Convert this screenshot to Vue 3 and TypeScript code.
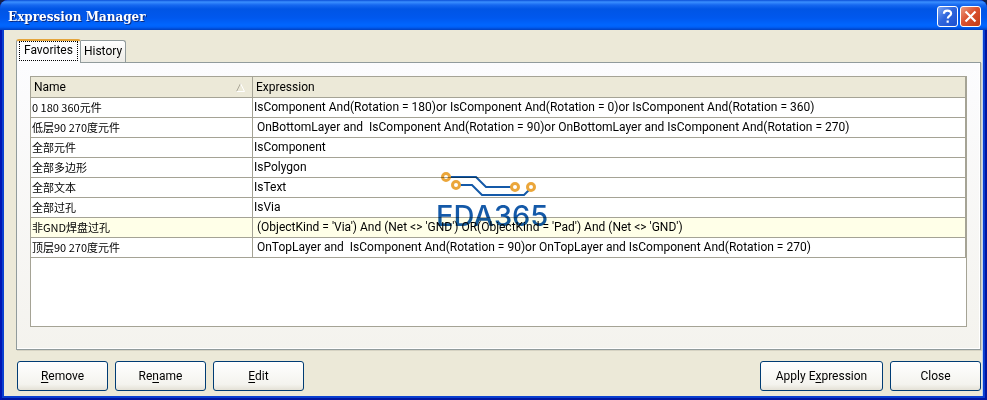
<script setup lang="ts">
import { ref } from 'vue'

interface Favorite {
  name: string
  expression: string
}

const tabs: string[] = ['Favorites', 'History']
const activeTab = ref<string>('Favorites')
const selected = ref<number>(6)

const favorites: Favorite[] = [
  { name: '0 180 360元件', expression: 'IsComponent And(Rotation = 180)or IsComponent And(Rotation = 0)or IsComponent And(Rotation = 360)' },
  { name: '低层90 270度元件', expression: ' OnBottomLayer and  IsComponent And(Rotation = 90)or OnBottomLayer and IsComponent And(Rotation = 270)' },
  { name: '全部元件', expression: 'IsComponent' },
  { name: '全部多边形', expression: 'IsPolygon' },
  { name: '全部文本', expression: 'IsText' },
  { name: '全部过孔', expression: 'IsVia' },
  { name: '非GND焊盘过孔', expression: " (ObjectKind = 'Via') And (Net <> 'GND') OR(ObjectKind = 'Pad') And (Net <> 'GND')" },
  { name: '顶层90 270度元件', expression: ' OnTopLayer and  IsComponent And(Rotation = 90)or OnTopLayer and IsComponent And(Rotation = 270)' },
]
</script>

<template>
  <div class="window">
    <header class="titlebar">
      <h1 class="title">Expression Manager</h1>
      <button class="caption help" type="button" aria-label="Help">
        <svg viewBox="0 0 21 21" aria-hidden="true">
          <path d="M6.5 7.5C6.5 5 8.200 4 10.500 4s4 1.200 4 3.200c0 2.600-3.700 2.800-3.700 5.600" />
          <path d="M10.700 15v2.500" />
        </svg>
      </button>
      <button class="caption close" type="button" aria-label="Close window">
        <svg viewBox="0 0 21 21" aria-hidden="true">
          <path d="M5 5l11 11M16 5L5 16" />
        </svg>
      </button>
    </header>

    <main class="body">
      <div class="tabs" role="tablist">
        <button
          v-for="tab in tabs"
          :key="tab"
          type="button"
          role="tab"
          class="tab"
          :class="{ active: tab === activeTab }"
          :aria-selected="tab === activeTab"
          @click="activeTab = tab"
        ><span>{{ tab }}</span></button>
      </div>

      <section class="panel">
        <div class="grid">
          <table>
            <thead>
              <tr>
                <th class="name-col">
                  <div class="sortable">
                    Name
                    <svg class="sort" viewBox="0 0 9 9" aria-hidden="true">
                      <path class="dark" d="M0.500 8.500L4.500 0.500" />
                      <path class="light" d="M4.500 0.500L8.500 8.500H0.500" />
                    </svg>
                  </div>
                </th>
                <th>Expression</th>
              </tr>
            </thead>
            <tbody>
              <tr
                v-for="(item, index) in favorites"
                :key="item.name"
                :class="{ selected: index === selected }"
                @click="selected = index"
              >
                <td>{{ item.name }}</td>
                <td>{{ item.expression }}</td>
              </tr>
            </tbody>
          </table>
          <div class="watermark">
            <svg viewBox="0 0 98 24" aria-hidden="true">
              <g class="traces">
                <path d="M10 5h26l10 10h25" />
                <path d="M20 13h12l10 10h42l5-5" />
              </g>
              <g class="pads">
                <circle cx="6" cy="5" r="3.500" />
                <circle cx="16" cy="13" r="3.500" />
                <circle cx="75" cy="15" r="3.500" />
                <circle cx="91" cy="15" r="3.500" />
              </g>
            </svg>
            <span>EDA365</span>
          </div>
        </div>
      </section>

      <footer class="actions">
        <button type="button" class="push"><u>R</u>emove</button>
        <button type="button" class="push">Re<u>n</u>ame</button>
        <button type="button" class="push"><u>E</u>dit</button>
        <span class="spacer"></span>
        <button type="button" class="push wide">Apply E<u>x</u>pression</button>
        <button type="button" class="push">Close</button>
      </footer>
    </main>
  </div>
</template>

<style>
body {
  background: #15204a;
}
</style>

<style scoped>
.window {
  box-sizing: border-box;
  min-height: 100vh;
  display: flex;
  flex-direction: column;
  padding: 0 4px 4px;
  background: #0a3fd0;
  box-shadow: inset 2px 0 #0016b4, inset -2px 0 #0016a0, inset 0 -2px #0016a0;
  border-radius: 8px 8px 0 0;
  overflow: hidden;
  font-family: Roboto, "Noto Sans CJK SC", sans-serif;
  font-size: 12px;
  line-height: 16px;
  color: #000;
}

button {
  font: inherit;
  color: inherit;
  margin: 0;
  padding: 0;
}

.titlebar {
  display: flex;
  align-items: center;
  gap: 2px;
  height: 30px;
  margin: 0 -4px;
  padding: 0 6px 0 8px;
  box-sizing: border-box;
  background: linear-gradient(#0a4fd8 0, #3a8fff 2px, #1668f0 5px, #0055e5 9px, #0058ee 18px, #0066ff 25px, #0060f8 27px, #0040c0 30px);
}

.title {
  flex: 1;
  margin: 0;
  padding-top: 4px;
  font: bold 12px/16px "DejaVu Serif", serif;
  color: #fff;
  text-shadow: 1px 1px #0a2a80;
}

.caption {
  box-sizing: border-box;
  width: 21px;
  height: 21px;
  margin-top: 3px;
  border: 1px solid #fff;
  border-radius: 3px;
  background: linear-gradient(135deg, #7ba4f2, #2f66dd 45%, #1c50d0);
}

.caption.close {
  background: linear-gradient(135deg, #eb9a80, #dc5230 45%, #c23c16);
}

.caption svg {
  display: block;
  width: 19px;
  height: 19px;
  fill: none;
  stroke: #fff;
  stroke-width: 2.4;
}

.body {
  flex: 1;
  display: flex;
  flex-direction: column;
  padding: 9px 1px 6px 12px;
  background: #ece9d8;
  border-right: 1px solid #b9d2f4;
}

.tabs {
  display: flex;
  align-items: flex-end;
  position: relative;
}

.tab {
  box-sizing: border-box;
  height: 22px;
  padding: 0 3px 2px;
  border: 1px solid #919b9c;
  border-left: 0;
  border-bottom: 0;
  border-radius: 0 3px 0 0;
  background: linear-gradient(#fff, #ecebe6);
}

.tab.active {
  height: 24px;
  margin-bottom: -1px;
  padding: 0 2px 2px;
  border-left: 1px solid #919b9c;
  border-top: 2px solid #e5a53c;
  border-radius: 3px 3px 0 0;
  background: #fcfcfe;
}

.tab.active span {
  display: block;
  height: 18px;
  padding: 0 4px;
  border: 1px dotted #000;
}

.panel {
  flex: 1;
  display: flex;
  padding: 13px 13px 22px;
  border: 1px solid #919b9c;
  background: linear-gradient(#fcfcfe, #f4f3ee);
  box-shadow: inset -1px -1px #fff, 1px 1px #d6d3c3;
}

.grid {
  flex: 1;
  position: relative;
  border: 1px solid #a5a395;
  background: #fff;
}

table {
  width: 100%;
  table-layout: fixed;
  border-collapse: separate;
  border-spacing: 0;
}

th,
td {
  box-sizing: border-box;
  height: 20px;
  padding: 0 1px 1px;
  border-right: 1px solid #a5a395;
  border-bottom: 1px solid #a5a395;
  text-align: left;
  font-weight: normal;
  line-height: 16px;
  white-space: pre;
  overflow: hidden;
}

th {
  height: 21px;
  padding: 0 3px;
  background: #ece9d8;
}

.name-col {
  width: 222px;
}

td:first-child {
  padding-bottom: 2px;
  font-family: "Noto Sans CJK SC", sans-serif;
  font-size: 11px;
}

.sortable {
  display: flex;
  align-items: center;
  justify-content: space-between;
  white-space: nowrap;
}

.sort {
  width: 9px;
  height: 9px;
  margin-right: 4px;
  fill: none;
}

.dark {
  stroke: #aca899;
}

.light {
  stroke: #fff;
}

.selected td {
  background: #ffffe8;
}

.watermark {
  position: absolute;
  left: 405px;
  top: 95px;
  display: flex;
  flex-direction: column;
  gap: 4px;
  color: #1459a8;
  font-family: Inter, sans-serif;
  font-size: 29px;
  font-weight: 500;
  line-height: 32px;
  mix-blend-mode: multiply;
  pointer-events: none;
}

.watermark svg {
  width: 98px;
  height: 24px;
  margin-left: 4px;
  fill: none;
}

.traces {
  stroke: #1459a8;
  stroke-width: 2;
}

.pads {
  stroke: #eba63a;
  stroke-width: 3;
}

.actions {
  display: flex;
  gap: 7px;
  padding: 11px 0 0 1px;
  margin-bottom: -1px;
}

.spacer {
  flex: 1;
}

.push {
  box-sizing: border-box;
  width: 91px;
  height: 30px;
  border: 1px solid #003c74;
  border-radius: 3px;
  background: linear-gradient(#fff, #f4f3ee 80%, #e4e1d6);
}

.push.wide {
  width: 123px;
}

u {
  text-underline-offset: 2px;
}
</style>
